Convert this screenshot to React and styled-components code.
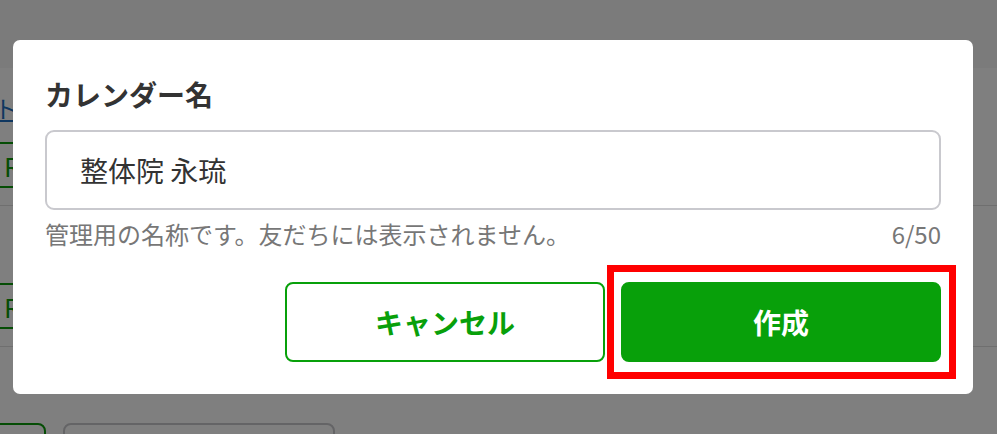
import React from 'react';
import styled, { createGlobalStyle } from 'styled-components';

const GlobalStyle = createGlobalStyle`
  html, body {
    margin: 0;
    padding: 0;
    background: #ffffff;
    overflow: hidden;
  }
  body {
    font-family: 'Noto Sans CJK JP', 'Noto Sans', sans-serif;
    color: #333333;
  }
  * {
    box-sizing: border-box;
  }
`;

const Page = styled.div`
  width: 997px;
  height: 434px;
  overflow: hidden;
`;

const Header = styled.div`
  height: 68px;
  background: #f6f6f6;
`;

const Row = styled.div`
  display: flex;
  flex-direction: column;
  align-items: flex-start;
  padding: ${(p) => p.$top}px 0 17px;
  border-bottom: 1px solid #dedede;
`;

const Column = styled.div`
  display: flex;
  flex-direction: column;
  align-items: flex-start;
  gap: 18px;
  margin-left: -54px;
`;

const ListLink = styled.a`
  font-size: 24px;
  line-height: 32px;
  color: #1f6fc0;
  text-decoration: underline;
`;

const Tag = styled.div`
  display: flex;
  align-items: center;
  height: 46px;
  width: 300px;
  margin-left: 25px;
  padding: 0 16px 0 31px;
  border: 2px solid #0a9a0a;
  border-radius: 4px;
  color: #0a9a0a;
  font-size: 26px;
`;

const Footer = styled.div`
  display: flex;
  gap: 17px;
  padding-top: 76px;
  margin-left: -60px;
`;

const GhostButton = styled.div`
  width: ${(p) => p.$width}px;
  height: 48px;
  border: 2px solid ${(p) => (p.$green ? '#0a9a0a' : '#c8c8cc')};
  border-radius: 8px;
  background: #ffffff;
`;

const Overlay = styled.div`
  position: fixed;
  inset: 0;
  display: flex;
  align-items: center;
  padding-left: 13px;
  background: rgba(0, 0, 0, 0.5);
`;

const Modal = styled.div`
  width: 960px;
  padding: 34px 32px 32px;
  background: #ffffff;
  border-radius: 7px;
`;

const Title = styled.h2`
  margin: 0 0 16px;
  font-size: 28px;
  line-height: 40px;
  font-weight: 700;
  color: #333333;
`;

const NameInput = styled.input`
  display: block;
  width: 100%;
  height: 80px;
  padding: 0 33px;
  border: 2px solid #c9c9ce;
  border-radius: 9px;
  font-family: 'Noto Sans CJK JP', 'Noto Sans', sans-serif;
  font-size: 28px;
  color: #333333;
  outline: none;
`;

const HelpRow = styled.div`
  display: flex;
  justify-content: space-between;
  margin-top: 8px;
  font-size: 24px;
  line-height: 32px;
  color: #777777;
`;

const Actions = styled.div`
  display: flex;
  justify-content: flex-end;
  gap: 16px;
  margin-top: 32px;
`;

const Button = styled.button`
  position: relative;
  width: 320px;
  height: 80px;
  border: 2px solid #08a00a;
  border-radius: 8px;
  background: ${(p) => (p.$primary ? '#08a00a' : '#ffffff')};
  color: ${(p) => (p.$primary ? '#ffffff' : '#08a00a')};
  font-family: 'Noto Sans CJK JP', 'Noto Sans', sans-serif;
  font-size: 28px;
  font-weight: 700;
  cursor: pointer;
`;

const Highlight = styled.span`
  position: absolute;
  top: -19px;
  left: -16px;
  right: -17px;
  bottom: -19px;
  border: 7px solid #ff0000;
  pointer-events: none;
`;

const App = () => {
  return (
    <>
      <GlobalStyle />
      <Page>
        <Header />
        <Row $top={24}>
          <Column>
            <ListLink>リスト</ListLink>
            <Tag>R</Tag>
          </Column>
        </Row>
        <Row $top={77}>
          <Column>
            <Tag>R</Tag>
          </Column>
        </Row>
        <Footer>
          <GhostButton $green $width={106} />
          <GhostButton $width={272} />
        </Footer>
      </Page>
      <Overlay>
        <Modal>
          <Title>カレンダー名</Title>
          <NameInput defaultValue="整体院 永琉" />
          <HelpRow>
            <span>管理用の名称です。友だちには表示されません。</span>
            <span>6/50</span>
          </HelpRow>
          <Actions>
            <Button>キャンセル</Button>
            <Button $primary>
              作成
              <Highlight />
            </Button>
          </Actions>
        </Modal>
      </Overlay>
    </>
  );
};

export default App;
